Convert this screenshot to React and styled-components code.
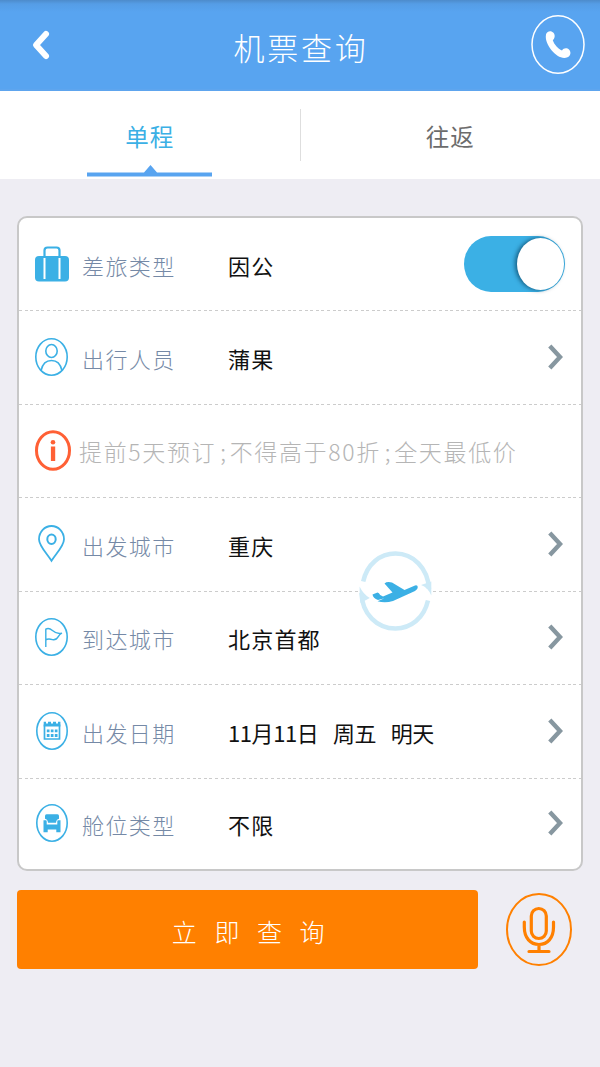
import React from "react";
import styled, { createGlobalStyle } from "styled-components";

const BLUE = "#3bb0e5";

const GlobalStyle = createGlobalStyle`
  * { box-sizing: border-box; }
  body {
    margin: 0;
    background: #eeedf3;
    font-family: "Noto Sans CJK SC", sans-serif;
    font-weight: 300;
  }
  button { font: inherit; border: 0; padding: 0; background: none; }
  svg { display: block; overflow: visible; }
`;

const Page = styled.div`
  width: 600px;
  height: 1067px;
  overflow: hidden;
  background: #eeedf3;
`;

const Header = styled.header`
  display: grid;
  grid-template-columns: 54px 1fr 54px;
  align-items: center;
  height: 91px;
  padding: 0 15px;
  color: #fff;
  background: linear-gradient(#4d8bcb 0, #559de6 4px, #58a4f0 12px);
  border-bottom: 2px solid #5ea5ee;
`;

const Title = styled.h1`
  margin: 0;
  padding: 5px 0 0 2px;
  text-align: center;
  font-size: 31px;
  line-height: 40px;
  font-weight: 300;
  letter-spacing: 2.7px;
`;

const BackButton = styled.button`
  padding: 1px 0 0 17px;
`;

const CallButton = styled.button`
  justify-self: end;
`;

const Tabs = styled.nav`
  display: flex;
  height: 88px;
  background: #fff;
`;

const Tab = styled.div`
  flex: 1;
  display: flex;
  flex-direction: column;
  align-items: center;
  justify-content: space-between;
  padding: 28px 0 2px;
  font-size: 23.5px;
  font-weight: 400;
  line-height: 34px;
  letter-spacing: 1px;
  color: ${(p) => (p.$active ? BLUE : "#6c6c6c")};
`;

const TabRule = styled.div`
  width: 1px;
  height: 52px;
  margin-top: 18px;
  background: #dedede;
`;

const Card = styled.section`
  position: relative;
  display: grid;
  grid-template-rows: 92px repeat(5, 93.5px) 1fr;
  width: 566px;
  height: 655px;
  margin: 37px 0 0 17px;
  background: #fff;
  border: 2px solid #c8c8c8;
  border-radius: 10px;
`;

const Row = styled.div`
  display: flex;
  align-items: center;
  padding: 0 16px;
  & + &::before {
    content: "";
    align-self: flex-start;
    width: 562px;
    height: 1px;
    margin: 0 -546px 0 -16px;
    background: repeating-linear-gradient(90deg, #ccc 0 3px, transparent 3px 5.6px);
  }
`;

const IconSlot = styled.span`
  display: flex;
  flex: none;
  justify-content: center;
  width: ${(p) => (p.$wide ? 36 : 33)}px;
  margin-right: ${(p) => (p.$wide ? 8 : 14)}px;
`;

const Label = styled.span`
  width: 146px;
  padding-top: 2px;
  font-size: 22px;
  line-height: 32px;
  letter-spacing: 1.4px;
  white-space: nowrap;
  color: #7589a6;
`;

const Value = styled.span`
  flex: 1;
  padding-top: 2px;
  font-size: 22px;
  line-height: 32px;
  letter-spacing: ${(p) => (p.$tight ? -0.4 : 1.2)}px;
  word-spacing: 10px;
  white-space: nowrap;
  font-weight: 400;
  color: #111;
`;

const Notice = styled.span`
  padding-top: 2px;
  font-size: 23px;
  line-height: 34px;
  letter-spacing: 1.65px;
  white-space: nowrap;
  color: #b5b5b5;
`;

const Pause = styled.span`
  padding: 0 2px 0 4px;
`;

const Toggle = styled.button`
  display: flex;
  justify-content: flex-end;
  width: 101px;
  height: 56px;
  padding: 2px 1px;
  background: ${BLUE};
  border-radius: 27px / 28px;
`;

const Knob = styled.span`
  width: 47px;
  height: 52px;
  background: #fff;
  border-radius: 50%;
  box-shadow: -2px 0 4px rgba(0, 50, 80, 0.65);
`;

const SwapBadge = styled.button`
  position: absolute;
  left: 340px;
  top: 333px;
  width: 73px;
  height: 80px;
  background: #fff;
  border-radius: 50%;
`;

const Actions = styled.div`
  display: flex;
  align-items: center;
  gap: 28px;
  margin: 19px 0 0 17px;
`;

const SearchButton = styled.button`
  width: 461px;
  height: 79px;
  padding: 3px 0 0 3px;
  font-size: 25px;
  font-weight: 300;
  letter-spacing: 17.6px;
  text-indent: 16px;
  color: #fff;
  background: #ff8000;
  border-radius: 4px;
`;

const MicButton = styled.button``;

const ChevronIcon = styled.svg`
  flex: none;
  margin-right: 2px;
`;

const Chevron = () => (
  <ChevronIcon width="15" height="26" viewBox="0 0 15 26" fill="none" stroke="#8797a0" strokeWidth="4.4">
    <path d="M1.8 2 12 13 1.8 24" />
  </ChevronIcon>
);

const BackIcon = () => (
  <svg width="18" height="30" viewBox="0 0 18 30" fill="none" stroke="#fff" strokeWidth="6" strokeLinecap="round" strokeLinejoin="round">
    <path d="M14 4 4 15 14 26" />
  </svg>
);

const PhoneIcon = () => (
  <svg width="54" height="60" viewBox="0 0 54 60">
    <ellipse cx="27" cy="29.5" rx="26" ry="28.8" fill="none" stroke="#fff" strokeWidth="1.5" />
    <path
      fill="#fff"
      d="M15 19.500C15.500 16.300 20 14.800 22.500 17.800C24.500 20.500 23.800 23.500 21.800 25.200C23.200 29.500 26.800 33.500 31 35.500C32.500 33 36 32.500 38.200 34.800C40.500 37.500 39.500 41 36.500 42.300C31 44.500 25 40.500 20.500 35.200C16.500 30.200 14 24.500 15 19.500Z"
    />
  </svg>
);

const TabMarker = () => (
  <svg width="125" height="12" viewBox="0 0 125 12" fill="#58a4f0">
    <path d="M0 7.5H57L63.5 0 70 7.5H125V11.5H0Z" />
  </svg>
);

const SuitcaseIcon = () => (
  <svg width="34" height="36" viewBox="0 0 34 36">
    <path d="M9.5 10V4.5Q9.5 1.5 12.5 1.5H21.5Q24.5 1.5 24.5 4.5V10" fill="none" stroke={BLUE} strokeWidth="2.2" />
    <rect y="10" width="34" height="25.5" rx="4" fill={BLUE} />
    <path d="M9.5 12V33M24.5 12V33" stroke="#fff" strokeWidth="2" />
  </svg>
);

const Ring = ({ width = 33, children }) => (
  <svg width={width} height="38" viewBox={`0 0 ${width} 38`} fill="none" stroke={BLUE} strokeWidth="1.6">
    <ellipse cx={width / 2} cy="19" rx={width / 2 - 0.8} ry="18.2" />
    {children}
  </svg>
);

const PersonIcon = () => (
  <Ring>
    <ellipse cx="16.5" cy="13" rx="5.7" ry="6.5" />
    <path d="M6.2 32.2C7.5 26 11.5 22.5 16.5 22.5S25.5 26 26.8 32.2" />
  </Ring>
);

const InfoIcon = () => (
  <svg width="36" height="41" viewBox="0 0 36 41">
    <ellipse cx="18" cy="20.5" rx="16.5" ry="18.8" fill="none" stroke="#ff6035" strokeWidth="3" />
    <circle cx="18" cy="12.2" r="2.3" fill="#ff6035" />
    <rect x="15.9" y="16.5" width="4.3" height="14.5" fill="#ff6035" />
  </svg>
);

const PinIcon = () => (
  <svg width="27" height="37" viewBox="0 0 27 37" fill="none" stroke={BLUE} strokeWidth="1.8">
    <path d="M13.5 35.8C9 28.5 1 21 1 14.2A12.5 13.2 0 0 1 26 14.2C26 21 18 28.5 13.5 35.8Z" />
    <ellipse cx="13.5" cy="14.3" rx="4.2" ry="4.7" strokeWidth="2" />
  </svg>
);

const FlagIcon = () => (
  <Ring>
    <path d="M10.8 29V11.2C17 7.5 17.5 17.5 26.5 15.3C22.5 16.5 23.5 23 17.5 21.6C14.5 20.6 12.5 20.5 10.8 22" strokeWidth="1.4" strokeLinejoin="round" />
  </Ring>
);

const CalendarIcon = () => (
  <Ring width={32}>
    <path d="M8.5 12.500V27H23.5V12.500" strokeWidth="1.7" />
    <path d="M7.700 9.700H10V11.500H12V9.700H15V11.500H17V9.700H20V11.500H22V9.700H24.400V14.500H7.700Z" fill={BLUE} stroke="none" />
    <path d="M10.800 18.800H21.500M10.800 23.500H21.500" strokeWidth="2.800" strokeDasharray="2.700 1.300" />
  </Ring>
);

const SeatIcon = () => (
  <Ring width={32}>
    <g fill={BLUE} stroke="none">
      <path d="M10.5 10.3H21.5Q23 10.3 23 12V14.8Q20.3 15.2 20 18.8H12Q11.700 15.2 9 14.8V12Q9 10.3 10.5 10.3Z" />
      <path d="M7.5 16.3H9.8Q10.700 16.3 10.700 17.3V20.4H21.3V17.3Q21.3 16.3 22.2 16.3H24.5V28.2H20.3V25.5H11.700V28.2H7.5Z" />
    </g>
  </Ring>
);

const PlaneSwapIcon = () => (
  <svg width="73" height="80" viewBox="0 0 73 80">
    <g fill="none" stroke="#cdeaf7" strokeWidth="4.5">
      <path d="M4.2 30.5C8 13 21 2.5 36.5 2.5C54 2.5 69 17 70 38" />
      <path d="M69 49.5C65 67 52 77.5 36.5 77.5C18 77.5 3 63 2.5 42" />
    </g>
    <path d="M62 34 72.3 30.5V44.5Q69 36.5 62 34ZM.6 35.5Q4 43 10.8 47L1.5 52Q.3 43 .6 35.5Z" fill="#cdeaf7" />
    <path
      fill={BLUE}
      d="M13.5 43.5 18.5 41.5Q20 41.5 21.2 44L24 45.5 33.5 41.5 25.5 32.5Q28 30.2 33 31.5L45.5 39 56 34.5Q58.6 33.8 58.8 36Q59 38.3 56 40L34 50Q26 52.5 18.5 50.2L25.5 47.3 19 49Q14 47 13.5 43.5Z"
    />
  </svg>
);

const MicIcon = () => (
  <svg width="66" height="73" viewBox="0 0 66 73" fill="none" stroke="#ff8000" strokeLinecap="round">
    <ellipse cx="33" cy="36.5" rx="32" ry="35.5" strokeWidth="2" />
    <rect x="25.3" y="15.5" width="15" height="30" rx="7.5" strokeWidth="3.2" />
    <path d="M18.3 29V34C18.3 45 24.5 51.5 33 51.5S47.5 45 47.5 34V29M33 51.5V58.5M23 58.5H43" strokeWidth="3.2" />
  </svg>
);

const Field = ({ icon, label, value, tight, children }) => (
  <Row>
    <IconSlot>{icon}</IconSlot>
    <Label>{label}</Label>
    <Value $tight={tight}>{value}</Value>
    {children || <Chevron />}
  </Row>
);

export default function App() {
  return (
    <Page>
      <GlobalStyle />
      <Header>
        <BackButton aria-label="返回"><BackIcon /></BackButton>
        <Title>机票查询</Title>
        <CallButton aria-label="电话"><PhoneIcon /></CallButton>
      </Header>
      <Tabs>
        <Tab $active>单程<TabMarker /></Tab>
        <TabRule />
        <Tab>往返</Tab>
      </Tabs>
      <Card>
        <Field icon={<SuitcaseIcon />} label="差旅类型" value="因公">
          <Toggle role="switch" aria-checked="true"><Knob /></Toggle>
        </Field>
        <Field icon={<PersonIcon />} label="出行人员" value="蒲果" />
        <Row>
          <IconSlot $wide><InfoIcon /></IconSlot>
          <Notice>
            提前5天预订<Pause>;</Pause>不得高于80折<Pause>;</Pause>全天最低价
          </Notice>
        </Row>
        <Field icon={<PinIcon />} label="出发城市" value="重庆" />
        <Field icon={<FlagIcon />} label="到达城市" value="北京首都" />
        <Field icon={<CalendarIcon />} label="出发日期" value="11月11日 周五 明天" tight />
        <Field icon={<SeatIcon />} label="舱位类型" value="不限" />
        <SwapBadge aria-label="交换城市"><PlaneSwapIcon /></SwapBadge>
      </Card>
      <Actions>
        <SearchButton>立即查询</SearchButton>
        <MicButton aria-label="语音"><MicIcon /></MicButton>
      </Actions>
    </Page>
  );
}
